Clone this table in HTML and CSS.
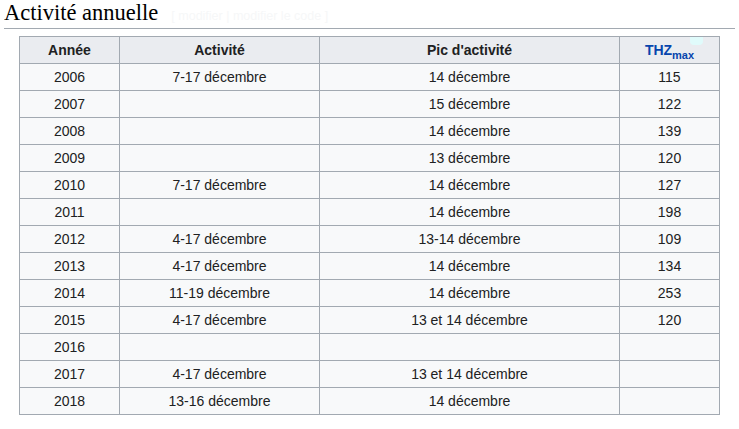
FILE: index.html
```html
<!DOCTYPE html>
<html lang="fr">
<head>
<meta charset="utf-8">
<link rel="stylesheet" href="styles.css">
</head>
<body>
<h2 class="heading"><span class="headline">Activité annuelle</span><span class="edit">[ modifier | modifier le code ]</span></h2>
<table class="wikitable">
<thead>
<tr><th class="c1">Année</th><th class="c2">Activité</th><th class="c3">Pic d'activité</th><th class="c4"><span class="link">THZ<sub>max</sub></span><span class="blob"></span></th></tr>
</thead>
<tbody>
<tr><td>2006</td><td>7-17 décembre</td><td>14 décembre</td><td>115</td></tr>
<tr><td>2007</td><td></td><td>15 décembre</td><td>122</td></tr>
<tr><td>2008</td><td></td><td>14 décembre</td><td>139</td></tr>
<tr><td>2009</td><td></td><td>13 décembre</td><td>120</td></tr>
<tr><td>2010</td><td>7-17 décembre</td><td>14 décembre</td><td>127</td></tr>
<tr><td>2011</td><td></td><td>14 décembre</td><td>198</td></tr>
<tr><td>2012</td><td>4-17 décembre</td><td>13-14 décembre</td><td>109</td></tr>
<tr><td>2013</td><td>4-17 décembre</td><td>14 décembre</td><td>134</td></tr>
<tr><td>2014</td><td>11-19 décembre</td><td>14 décembre</td><td>253</td></tr>
<tr><td>2015</td><td>4-17 décembre</td><td>13 et 14 décembre</td><td>120</td></tr>
<tr><td>2016</td><td></td><td></td><td></td></tr>
<tr><td>2017</td><td>4-17 décembre</td><td>13 et 14 décembre</td><td></td></tr>
<tr><td>2018</td><td>13-16 décembre</td><td>14 décembre</td><td></td></tr>
</tbody>
</table>
</body>
</html>
```
FILE: styles.css
```css
html, body {
  margin: 0;
  padding: 0;
  background: #ffffff;
}
body {
  padding: 0 4px;
  font-family: "Liberation Sans", Arial, sans-serif;
  color: #202122;
}
.heading {
  margin: 0;
  padding-top: 0;
  height: 28px;
  overflow: hidden;
  font-family: "Liberation Serif", "Times New Roman", serif;
  font-weight: normal;
  font-size: 22.5px;
  line-height: 25px;
  border-bottom: 1px solid #a2a9b1;
  color: #000000;
}
.edit {
  margin-left: 13px;
  font-family: "Liberation Sans", Arial, sans-serif;
  font-size: 12.5px;
  line-height: 1;
  color: #f6f7f8;
}
.wikitable {
  margin: 7px 0 0 15px;
  border-collapse: collapse;
  border: 1px solid #a2a9b1;
  background: #f8f9fa;
  font-size: 14px;
  color: #202122;
}
.wikitable th,
.wikitable td {
  border: 1px solid #a2a9b1;
  padding: 3px 6px;
  line-height: 20px;
  text-align: center;
  height: 20px;
}
.wikitable th {
  background: #eaecf0;
  font-weight: bold;
  position: relative;
}
.c1 { width: 87px; }
.c2 { width: 187px; }
.c3 { width: 287px; }
.c4 { width: 87px; }
.link {
  color: #0645ad;
}
.link sub {
  font-size: 11px;
  line-height: 0;
  vertical-align: -4px;
}
.blob {
  position: absolute;
  top: 0;
  right: 16px;
  width: 13px;
  height: 8px;
  background: #e0fbfb;
  border-radius: 0 0 4px 4px;
}
```
